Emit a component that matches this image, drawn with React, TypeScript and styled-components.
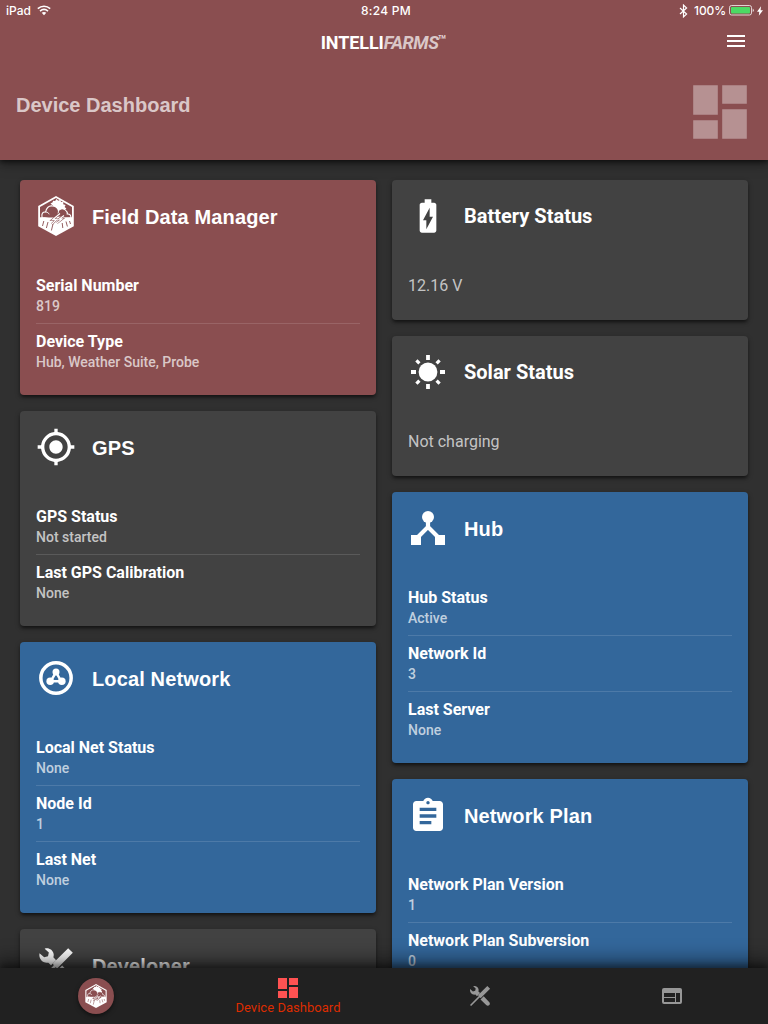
import React from 'react';
import styled, { createGlobalStyle, css } from 'styled-components';
import { MdBatteryChargingFull, MdGpsFixed, MdAssignment, MdMenu } from 'react-icons/md';

const Global = createGlobalStyle`
  * { box-sizing: border-box; }
  body { margin: 0; background: #303030; font-family: Roboto, sans-serif; color: #fff; overflow: hidden; }
  svg { display: block; flex: none; }
`;

const Page = styled.div`
  height: 1024px;
  display: flex;
  flex-direction: column;
  overflow: hidden;
`;

const Header = styled.header`
  height: 160px;
  flex: none;
  background: #8a4e50;
  box-shadow: 0 2px 5px rgba(0, 0, 0, 0.6), 0 4px 12px rgba(0, 0, 0, 0.35);
  position: relative;
  z-index: 1;
`;

const StatusBar = styled.div`
  height: 20px;
  padding: 1px 5px 0 6px;
  display: grid;
  grid-template-columns: 1fr auto 1fr;
  align-items: center;
  font: 500 12px/20px Inter, sans-serif;
`;

const StatusGroup = styled.div<{ $end?: boolean }>`
  display: flex;
  align-items: center;
  gap: ${(p) => (p.$end ? '3px' : '6px')};
  justify-content: ${(p) => (p.$end ? 'flex-end' : 'flex-start')};
  svg { margin-top: -1px; }
`;

const Percent = styled.span`
  margin-left: 3px;
  letter-spacing: -0.1px;
`;

const Clock = styled.span`
  letter-spacing: 0.25px;
  padding-left: 3px;
`;

const TopBar = styled.div`
  height: 44px;
  display: grid;
  grid-template-columns: 1fr auto 1fr;
  align-items: center;
  padding: 0 20px;
`;

const Brand = styled.div`
  grid-column: 2;
  display: flex;
  font-size: 18px;
  font-weight: 700;
  line-height: 24px;
  letter-spacing: -0.1px;
  padding-top: 2px;
  margin-right: 1px;
`;

const BrandLight = styled.span`
  font-style: italic;
  color: rgba(255, 255, 255, 0.7);
  letter-spacing: -0.4px;
`;

const Trademark = styled.span`
  font-size: 14px;
  font-weight: 500;
  line-height: 19px;
  margin-left: -1px;
  color: rgba(255, 255, 255, 0.8);
`;

const MenuButton = styled.button`
  grid-column: 3;
  justify-self: end;
  border: 0;
  padding: 0;
  margin-top: -2px;
  background: none;
  color: #fff;
`;

const Hero = styled.div`
  height: 96px;
  padding: 21px 21px 0 16px;
  display: flex;
  justify-content: space-between;
  color: rgba(255, 255, 255, 0.7);
`;

const HeroTitle = styled.h1`
  margin: 7px 0 0;
  font: 700 20px/26px "Liberation Sans", sans-serif;
`;

const HeroIcon = styled.div`
  color: #fff;
  opacity: 0.38;
`;

const Columns = styled.main`
  flex: 1;
  min-height: 0;
  display: grid;
  grid-template-columns: 1fr 1fr;
  gap: 16px;
  align-items: start;
  padding: 20px 20px 0;
`;

const Column = styled.div`
  display: flex;
  flex-direction: column;
  gap: 16px;
`;

type Tone = 'red' | 'grey' | 'blue';
const tones: Record<Tone, string> = { red: '#8a4e50', grey: '#424242', blue: '#33679b' };

const CardBox = styled.section<{ $tone: Tone }>`
  background: ${(p) => tones[p.$tone]};
  border-radius: 4px;
  padding: 16px;
  box-shadow: 0 3px 3px -1px rgba(0, 0, 0, 0.35), 0 2px 5px rgba(0, 0, 0, 0.4);
`;

const CardHead = styled.div`
  display: flex;
  align-items: center;
  gap: 16px;
  height: 40px;
  svg { width: 40px; height: 40px; }
`;

const CardTitle = styled.h2<{ $wide: boolean }>`
  margin: 0;
  font-size: 20px;
  line-height: 26px;
  font-weight: 700;
  ${(p) => p.$wide && css`
    font-family: "Liberation Sans", sans-serif;
    padding-top: 2px;
    letter-spacing: 0.13px;
  `}
`;

const CardBody = styled.div`
  padding-top: 37px;
`;

const Reading = styled.p`
  margin: 0;
  padding: 4px 0 9px;
  font-size: 16px;
  line-height: 18px;
  color: rgba(255, 255, 255, 0.7);
`;

const Row = styled.div`
  height: 56px;
  padding-top: 3px;
  & + & { border-top: 1px solid rgba(255, 255, 255, 0.13); padding-top: 8px; }
  &:first-child { height: 50px; }
`;

const Label = styled.div`
  font-size: 16px;
  font-weight: 700;
  line-height: 20px;
`;

const Value = styled.div`
  font-size: 14px;
  font-weight: 500;
  line-height: 21px;
  color: rgba(255, 255, 255, 0.7);
`;

const Nav = styled.nav`
  height: 56px;
  flex: none;
  background: #212121;
  display: grid;
  grid-template-columns: repeat(4, 1fr);
  position: relative;
  z-index: 1;
  box-shadow: 0 -3px 7px rgba(0, 0, 0, 0.45), 0 -7px 16px 4px rgba(0, 0, 0, 0.35);
`;

const NavItem = styled.a<{ $active?: boolean }>`
  display: flex;
  flex-direction: column;
  align-items: center;
  justify-content: center;
  gap: 2px;
  padding-top: ${(p) => (p.$active ? '2px' : '0')};
  color: ${(p) => (p.$active ? '#ff5252' : '#979797')};
`;

const NavLabel = styled.span`
  color: #dd2c00;
  font-size: 13px;
  line-height: 16px;
  letter-spacing: 0.03px;
`;

const Badge = styled.span`
  width: 36px;
  height: 36px;
  border-radius: 50%;
  background: #8a4e50;
  color: #fff;
  display: flex;
  align-items: center;
  justify-content: center;
  box-shadow: 0 2px 4px rgba(0, 0, 0, 0.5);
`;

const FarmLogo = ({ size = 40, hole = '#8a4e50' }: { size?: number; hole?: string }) => (
  <svg width={size} height={size} viewBox="0 0 40 40" fill="none">
    <path d="M20 0 37.800 10v20.300L20 40 2.200 30.300V10Z" fill="currentColor" />
    <path d="M20 2.100 36 11.100V22H4V11.100Z" fill={hole} />
    <path d="m14.500 7.500 2.200-1.200.3-1.600 2.100.4L20.500 3l1.700 1.800 2.300-1 .5 2.300 2.400-.2-.2 2.300 2.400.7-1 2 1.800 1.500-1.700 1.400.5 2.700-6-1.500-6-5Z" fill="currentColor" />
    <path d="M6 21c-.6-3.400.7-5.300 3.600-5C10.500 11.700 13 9.600 16.200 9.900c3.700.2 5.700 2.200 6.200 4.600 1.800-1.700 4.800-2 6.800-.6 1.700 1.200 2.300 2.700 2.100 4.100 2.200-.3 3.400 1 3.700 3.500v.5H6Z" fill={hole} stroke="currentColor" strokeWidth="1.100" />
    <path d="M9.600 16c1.800.1 3 .9 3.600 2.300M22.400 14.500c.2 1.200 0 2-.4 2.900" stroke="currentColor" strokeWidth=".9" />
    <path d="M4 21.200h5l4 .8h4l6-1.600 7 1 6-.2V26H4Z" fill="currentColor" />
    <path d="m24 17.500-7.300 6 4.200-.2-5 4.700M28 19.500l-5 3.700 3-.2-5 4" stroke={hole} strokeWidth="2.200" />
    <path d="m24 17.500-7.300 6 4.200-.2-5 4.700M28 19.500l-5 3.700 3-.2-5 4" stroke="currentColor" strokeWidth="1.200" />
    <path d="M7.800 25 6.500 30M12 26l-1.600 6M17 28l-1.600 6.500M26.200 27l.6 5M30 25.500l1.400 5M33.500 25l1 3" stroke={hole} strokeWidth=".9" />
  </svg>
);

const DashboardIcon = ({ size }: { size: number }) => (
  <svg width={size} height={size} viewBox="0 0 54 54" fill="currentColor">
    <path d="M.200.200h24.600v29.600H.200ZM29.200.200h24.600v18.600H29.200ZM.200 35.200h24.600v18.600H.200ZM29.200 24.200h24.600v29.600H29.200Z" />
  </svg>
);

const NavDashboardIcon = () => (
  <svg width="20" height="20" viewBox="0 0 20 20" fill="currentColor">
    <path d="M0 0h9v11H0ZM11 0h9v7h-9ZM0 13h9v7H0ZM11 9h9v11h-9Z" />
  </svg>
);

const SunIcon = () => (
  <svg viewBox="0 0 40 40" fill="none" stroke="currentColor">
    <circle cx="20" cy="20" r="9.400" fill="currentColor" stroke="none" />
    <path strokeWidth="3.800" d="M20 3v5M20 32v5M3 20h5M32 20h5" />
    <path strokeWidth="3.200" d="m8.400 8.400 3 3M28.600 28.600l3 3M31.600 8.400l-3 3M11.400 28.600l-3 3" />
  </svg>
);

const HubIcon = () => (
  <svg viewBox="0 0 40 40">
    <circle cx="20" cy="9" r="6" fill="currentColor" />
    <path d="M20 12v7L9 30M20 19l11 11" fill="none" stroke="currentColor" strokeWidth="4.200" />
    <path d="M3 27h10v10H3ZM27 27h10v10H27Z" fill="currentColor" />
  </svg>
);

const ClipboardIcon = styled(MdAssignment)`
  margin-top: 2px;
`;

const LayoutIcon = () => (
  <svg width="20" height="16" viewBox="0 0 20 16">
    <path fillRule="evenodd" fill="currentColor" d="M2 0h16q2 0 2 2v12q0 2-2 2H2q-2 0-2-2V2Q0 0 2 0ZM2 5v4h11V5ZM2 10v4h11v-4ZM14 5v9h4V5Z" />
  </svg>
);

const CirclesIcon = () => (
  <svg viewBox="0 0 24 24" fill="none">
    <circle cx="12" cy="12" r="9.100" stroke="currentColor" strokeWidth="2.100" />
    <path d="M12 8.500 8.900 13.900h6.200Z" stroke="currentColor" strokeWidth="1.500" />
    <circle cx="12" cy="8.400" r="2.100" fill="currentColor" />
    <circle cx="8.500" cy="13.900" r="2.250" fill="currentColor" />
    <circle cx="15.500" cy="13.900" r="2.250" fill="currentColor" />
  </svg>
);

const ToolsIcon = ({ size = 24 }: { size?: number }) => (
  <svg width={size} height={size} viewBox="0 0 24 24" fill="currentColor">
    <path d="M2.100 5 4.900 7.400 7.200 6.800 7.700 4.500 5.200 2.200C7.600 1.400 10.200 3 10.600 5.400c.1.800 0 1.300-.2 2l1.700 1.700L9 12.200 7.400 10.600C4.400 11.300 1.400 8.600 2.100 5Z" />
    <path d="M19.300 1.900 22.100 4.700 12.800 13.900 11.600 13.400 3.100 22 2 20.900l8.600-8.600-.4-1.300Z" />
    <path d="m12.500 15.500 3.200-3.200 5.400 5.700c1 1 1 2.300.2 3.100s-2.200.8-3.100-.1Z" />
  </svg>
);

const WifiIcon = () => (
  <svg width="14" height="11" viewBox="0 0 14 11" fill="none" stroke="currentColor" strokeWidth="1.600">
    <path d="M.8 3.700c3.600-3.200 8.800-3.200 12.400 0M3 6.100c2.400-2 5.600-2 8 0" />
    <path d="m7 10.200-2.300-2.500c1.300-1 3.300-1 4.600 0Z" fill="currentColor" stroke="none" />
  </svg>
);

const BluetoothIcon = () => (
  <svg width="9" height="14" viewBox="0 0 9 14" fill="none" stroke="currentColor" strokeWidth="1.200">
    <path d="m1 4 6.600 6L4.500 12.900V1.100L7.600 4 1 10" />
  </svg>
);

const BatteryIcon = () => (
  <svg width="25" height="11" viewBox="0 0 25 11">
    <rect x=".5" y=".5" width="22" height="9.500" rx="2" fill="none" stroke="#fff" strokeOpacity=".75" />
    <rect x="2" y="2" width="19" height="6.500" rx="1" fill="#4cd964" />
    <path d="M23.700 3.500q1.100.4 1.100 1.800t-1.100 1.800Z" fill="#fff" fillOpacity=".8" />
  </svg>
);

const BoltIcon = () => (
  <svg width="6" height="10" viewBox="0 0 6 10" fill="currentColor">
    <path d="M4 .3 0 5.700h2.300L1.800 9.700 6 4.200H3.600Z" />
  </svg>
);

interface CardProps {
  tone: Tone;
  title: string;
  icon: React.ReactNode;
  wide?: boolean;
  reading?: string;
  rows?: [string, string][];
}

const Card = ({ tone, title, icon, wide = false, reading, rows }: CardProps) => (
  <CardBox $tone={tone}>
    <CardHead>{icon}<CardTitle $wide={wide}>{title}</CardTitle></CardHead>
    <CardBody>
      {reading && <Reading>{reading}</Reading>}
      {rows?.map(([label, value]) => (
        <Row key={label}><Label>{label}</Label><Value>{value}</Value></Row>
      ))}
    </CardBody>
  </CardBox>
);

export default function App() {
  return (
    <Page>
      <Global />
      <Header>
        <StatusBar>
          <StatusGroup>iPad <WifiIcon /></StatusGroup>
          <Clock>8:24 PM</Clock>
          <StatusGroup $end><BluetoothIcon /><Percent>100%</Percent><BatteryIcon /><BoltIcon /></StatusGroup>
        </StatusBar>
        <TopBar>
          <Brand>INTELLI<BrandLight>FARMS</BrandLight><Trademark>™</Trademark></Brand>
          <MenuButton aria-label="Menu"><MdMenu size={24} /></MenuButton>
        </TopBar>
        <Hero>
          <HeroTitle>Device Dashboard</HeroTitle>
          <HeroIcon><DashboardIcon size={54} /></HeroIcon>
        </Hero>
      </Header>
      <Columns>
        <Column>
          <Card tone="red" wide title="Field Data Manager" icon={<FarmLogo />} rows={[['Serial Number', '819'], ['Device Type', 'Hub, Weather Suite, Probe']]} />
          <Card tone="grey" wide title="GPS" icon={<MdGpsFixed />} rows={[['GPS Status', 'Not started'], ['Last GPS Calibration', 'None']]} />
          <Card tone="blue" wide title="Local Network" icon={<CirclesIcon />} rows={[['Local Net Status', 'None'], ['Node Id', '1'], ['Last Net', 'None']]} />
          <Card tone="grey" wide title="Developer" icon={<ToolsIcon />} rows={[]} />
        </Column>
        <Column>
          <Card tone="grey" title="Battery Status" icon={<MdBatteryChargingFull />} reading="12.16 V" />
          <Card tone="grey" title="Solar Status" icon={<SunIcon />} reading="Not charging" />
          <Card tone="blue" wide title="Hub" icon={<HubIcon />} rows={[['Hub Status', 'Active'], ['Network Id', '3'], ['Last Server', 'None']]} />
          <Card tone="blue" wide title="Network Plan" icon={<ClipboardIcon />} rows={[['Network Plan Version', '1'], ['Network Plan Subversion', '0']]} />
        </Column>
      </Columns>
      <Nav>
        <NavItem><Badge><FarmLogo size={24} /></Badge></NavItem>
        <NavItem $active><NavDashboardIcon /><NavLabel>Device Dashboard</NavLabel></NavItem>
        <NavItem><ToolsIcon /></NavItem>
        <NavItem><LayoutIcon /></NavItem>
      </Nav>
    </Page>
  );
}
